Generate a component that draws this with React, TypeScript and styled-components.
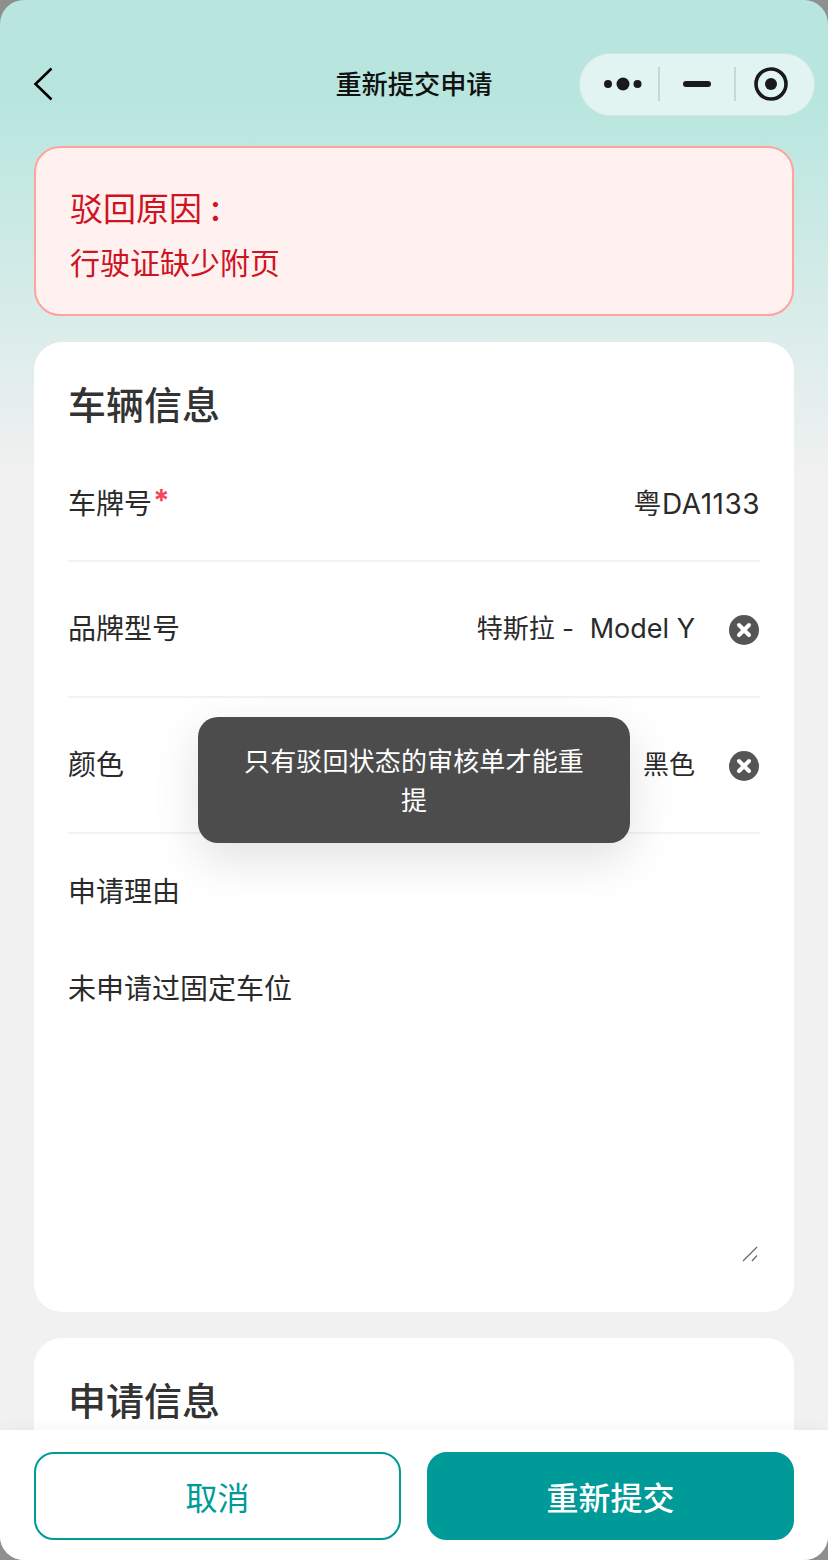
import styled, { createGlobalStyle } from "styled-components";

const GlobalStyle = createGlobalStyle`
  html, body {
    margin: 0;
    padding: 0;
    background: #8f8f8f;
  }
  * {
    box-sizing: border-box;
  }
`;

const Frame = styled.div`
  position: relative;
  display: flex;
  flex-direction: column;
  width: 828px;
  height: 1560px;
  overflow: hidden;
  border-radius: 24px;
  background: linear-gradient(#b8e6df 0, #b8e6df 100px, #f1f1f1 480px);
  font-family: Inter, "Noto Sans CJK SC", sans-serif;
  color: #2a2a2a;
`;

const NavBar = styled.header`
  display: grid;
  grid-template-columns: 1fr auto 1fr;
  align-items: center;
  height: 64px;
  margin-top: 52px;
  padding: 0 13px;
`;

const BackButton = styled.div`
  display: flex;
  align-items: center;
  height: 40px;
  padding-left: 19px;
`;

const Title = styled.h1`
  margin: 0 0 2px;
  font-size: 26.2px;
  font-weight: 500;
  color: #111;
`;

const Capsule = styled.div`
  justify-self: end;
  display: grid;
  grid-template-columns: 80px 76px 80px;
  align-items: center;
  width: 236px;
  height: 63px;
  border: 1px solid #d4e8e4;
  border-radius: 32px;
  background: #e2f4f1;
`;

const CapsuleCell = styled.div<{ $divided?: boolean; $shift?: number }>`
  display: flex;
  align-items: center;
  justify-content: center;
  height: 34px;
  padding-left: ${props => ((props.$shift ?? 0) > 0 ? props.$shift : 0)}px;
  padding-right: ${props => ((props.$shift ?? 0) < 0 ? -(props.$shift ?? 0) : 0)}px;
  border-right: ${props => (props.$divided ? "2px solid #c9d6d3" : "none")};
`;

const Content = styled.main`
  flex: 1;
  min-height: 0;
  overflow: hidden;
  padding: 30px 34px 0;
`;

const RejectBox = styled.section`
  height: 170px;
  margin-bottom: 26px;
  padding: 39px 34px 0;
  border: 2px solid #ffa39e;
  border-radius: 26px;
  background: #fff1f0;
  color: #cf1322;
`;

const RejectTitle = styled.div`
  font-size: 33px;
  line-height: 44px;
`;

const Colon = styled.span`
  margin-left: 8px;
  font-size: 36px;
  line-height: 36px;
  font-weight: 500;
`;

const RejectText = styled.div`
  margin-top: 11px;
  font-size: 30px;
  line-height: 42px;
`;

const Card = styled.section<{ $clipped?: boolean }>`
  min-height: ${props => (props.$clipped ? "200px" : "0")};
  margin-bottom: 26px;
  padding: 0 34px;
  border-radius: 28px;
  background: #fff;
`;

const CardTitle = styled.h2`
  margin: 0;
  padding-top: 36px;
  font-size: 38px;
  line-height: 54px;
  font-weight: 500;
  color: #333;
`;

const Row = styled.div<{ $first?: boolean }>`
  display: flex;
  align-items: center;
  justify-content: space-between;
  height: ${props => (props.$first ? "130px" : "136px")};
  padding-top: ${props => (props.$first ? "15px" : "0")};
  border-bottom: 2px solid #f2f2f2;
  font-size: 28px;
`;

const Label = styled.div`
  display: flex;
  align-items: flex-start;
  line-height: 40px;
`;

const Star = styled.span`
  margin-left: 1px;
  font-size: 30px;
  line-height: 32px;
  font-weight: 700;
  color: #f5475a;
`;

const Plate = styled.div`
  line-height: 40px;
  letter-spacing: 0.5px;
`;

const Value = styled.div`
  display: flex;
  align-items: center;
  gap: 34px;
  padding-right: 1px;
  font-size: 26px;
  line-height: 40px;
  white-space: pre;
`;

const ModelName = styled.span`
  margin-left: 1px;
  font-size: 27px;
`;

const ClearIcon = styled.svg`
  display: block;
  width: 30px;
  height: 30px;
  margin-top: 2px;
`;

const ReasonLabel = styled.div`
  padding-top: 38px;
  font-size: 28px;
  line-height: 40px;
`;

const ReasonField = styled.div`
  position: relative;
  margin-top: 57px;
`;

const ReasonInput = styled.textarea`
  display: block;
  width: 100%;
  height: 293px;
  padding: 0;
  border: none;
  outline: none;
  resize: none;
  background: transparent;
  font-family: inherit;
  font-size: 28px;
  line-height: 40px;
  color: #2a2a2a;
`;

const ResizeGrip = styled.svg`
  position: absolute;
  right: 1px;
  bottom: 0;
  width: 17px;
  height: 17px;
`;

const CardEnd = styled.div`
  height: 50px;
`;

const Footer = styled.footer`
  position: relative;
  display: grid;
  grid-template-columns: 1fr 1fr;
  gap: 26px;
  height: 130px;
  padding: 22px 34px 20px;
  background: #fff;
  box-shadow: 0 -4px 12px rgba(0, 0, 0, 0.03);
`;

const ActionButton = styled.button<{ $primary?: boolean }>`
  border: 2px solid #009a98;
  border-radius: 20px;
  background: ${props => (props.$primary ? "#009a98" : "#fff")};
  color: ${props => (props.$primary ? "#fff" : "#009a98")};
  font-family: inherit;
  font-size: 32px;
  font-weight: ${props => (props.$primary ? 500 : 400)};
`;

const Toast = styled.div`
  position: absolute;
  top: 717px;
  left: 198px;
  width: 432px;
  padding: 25px 44px 23px;
  border-radius: 20px;
  background: #4c4c4c;
  box-shadow: 0 16px 48px rgba(0, 0, 0, 0.12);
  color: #fff;
  font-size: 26px;
  line-height: 39px;
  letter-spacing: 0.15px;
  text-align: center;
`;

function Clear() {
  return (
    <ClearIcon viewBox="0 0 30 30">
      <circle cx="15" cy="15" r="15" fill="#555" />
      <path d="M10 10 L20 20 M20 10 L10 20" stroke="#fff" strokeWidth="4" strokeLinecap="round" />
    </ClearIcon>
  );
}

function App() {
  return (
    <Frame>
      <GlobalStyle />
      <NavBar>
        <BackButton>
          <svg width="24" height="36" viewBox="0 0 24 36" fill="none">
            <path d="M19.5 2.5 L3.5 18 L19.5 33.5" stroke="#000" strokeWidth="2.6" />
          </svg>
        </BackButton>
        <Title>重新提交申请</Title>
        <Capsule>
          <CapsuleCell $divided $shift={8}>
            <svg width="40" height="14" viewBox="0 0 40 14" fill="#1a1a1a">
              <circle cx="5" cy="7" r="4" />
              <circle cx="20" cy="7" r="6.5" />
              <circle cx="34.500" cy="7" r="4" />
            </svg>
          </CapsuleCell>
          <CapsuleCell $divided>
            <svg width="28" height="6" viewBox="0 0 28 6" fill="#1a1a1a">
              <rect width="28" height="6" rx="3" />
            </svg>
          </CapsuleCell>
          <CapsuleCell $shift={-10}>
            <svg width="34" height="34" viewBox="0 0 34 34" fill="none">
              <circle cx="17" cy="17" r="15" stroke="#1a1a1a" strokeWidth="3.6" />
              <circle cx="17" cy="17" r="6" fill="#1a1a1a" />
            </svg>
          </CapsuleCell>
        </Capsule>
      </NavBar>

      <Content>
        <RejectBox>
          <RejectTitle>
            驳回原因<Colon>:</Colon>
          </RejectTitle>
          <RejectText>行驶证缺少附页</RejectText>
        </RejectBox>

        <Card>
          <CardTitle>车辆信息</CardTitle>
          <Row $first>
            <Label>
              车牌号<Star>*</Star>
            </Label>
            <Plate>粤DA1133</Plate>
          </Row>
          <Row>
            <Label>品牌型号</Label>
            <Value>
              <span>
                特斯拉 -  <ModelName>Model Y</ModelName>
              </span>
              <Clear />
            </Value>
          </Row>
          <Row>
            <Label>颜色</Label>
            <Value>
              黑色
              <Clear />
            </Value>
          </Row>
          <ReasonLabel>申请理由</ReasonLabel>
          <ReasonField>
            <ReasonInput defaultValue="未申请过固定车位" />
            <ResizeGrip viewBox="0 0 17 17" fill="none" stroke="#666" strokeWidth="1.2">
              <path d="M1 16 L15 2 M10 16 L15 10.500" />
            </ResizeGrip>
          </ReasonField>
          <CardEnd />
        </Card>

        <Card $clipped>
          <CardTitle>申请信息</CardTitle>
        </Card>
      </Content>

      <Footer>
        <ActionButton>取消</ActionButton>
        <ActionButton $primary>重新提交</ActionButton>
      </Footer>

      <Toast>只有驳回状态的审核单才能重提</Toast>
    </Frame>
  );
}

export default App;
